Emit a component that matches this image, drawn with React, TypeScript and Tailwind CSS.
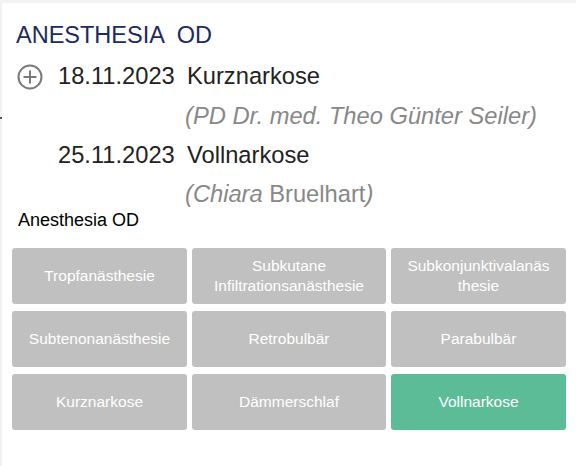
import React from 'react';

const OPTIONS: { label: React.ReactNode; active?: boolean }[] = [
  { label: 'Tropfanästhesie' },
  { label: <>Subkutane<br />Infiltrationsanästhesie</> },
  { label: <>Subkonjunktivalanäs<br />thesie</> },
  { label: 'Subtenonanästhesie' },
  { label: 'Retrobulbär' },
  { label: 'Parabulbär' },
  { label: 'Kurznarkose' },
  { label: 'Dämmerschlaf' },
  { label: 'Vollnarkose', active: true },
];

const PlusCircle = () => (
  <svg width="26" height="26" viewBox="0 0 26 26" fill="none" stroke="#7a7a7a" strokeWidth={2}>
    <circle cx="13" cy="13" r="11.5" />
    <path d="M13 6.5v13M6.5 13h13" />
  </svg>
);

export default function App() {
  return (
    <div
      className="relative min-h-[466px] w-[576px] bg-white border-t-[3px] border-l-[2px] border-[#f2f2f2] pl-[14px] pt-[20px]"
      style={{ fontFamily: '"Liberation Sans", Arial, sans-serif' }}
    >
      <span className="absolute left-[-2px] top-[114px] h-[2px] w-[2px] bg-[#555]" />

      <h1 className="text-[23.5px] leading-[25px] text-[#1b2a63] whitespace-pre">ANESTHESIA  OD</h1>

      <div className="grid grid-cols-[42px_129px_1fr] text-[23.7px] leading-[25px] text-[#222]">
        <div className="mt-[16px] flex items-center pl-[1px]">
          <PlusCircle />
        </div>
        <div className="mt-[16px]">18.11.2023</div>
        <div className="mt-[16px]">Kurznarkose</div>

        <div />
        <div />
        <div className="mt-[14px] -ml-[2px] italic text-[#888]">(PD Dr. med. Theo Günter Seiler)</div>

        <div />
        <div className="mt-[14px]">25.11.2023</div>
        <div className="mt-[14px]">Vollnarkose</div>

        <div />
        <div />
        <div className="mt-[14px] -ml-[2px] text-[#888]">
          <span className="italic">(Chiara</span> Bruelhart<span className="italic">)</span>
        </div>
      </div>

      <div className="mt-[3px] ml-[2px] text-[18px] leading-[21px] text-black">Anesthesia OD</div>

      <div className="mt-[17px] -ml-[4px] grid grid-cols-[175px_194px_175px] gap-x-[5px] gap-y-[7px]">
        {OPTIONS.map((o, i) => (
          <div
            key={i}
            className={`flex h-[56px] items-center justify-center rounded-[3px] text-center text-[15.5px] leading-[20px] text-white ${
              o.active ? 'bg-[#5dbc98]' : 'bg-[#c0c0c0]'
            }`}
          >
            <span>{o.label}</span>
          </div>
        ))}
      </div>
    </div>
  );
}
